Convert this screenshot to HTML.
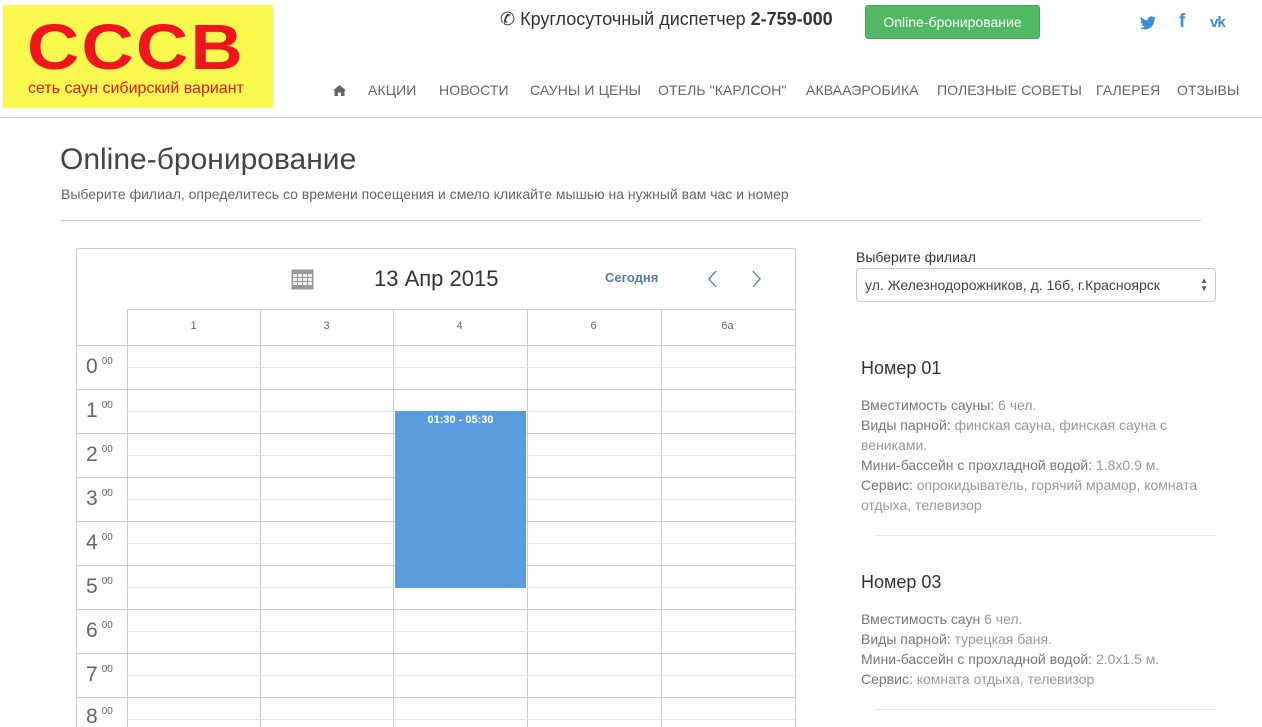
<!DOCTYPE html>
<html><head><meta charset="utf-8"><style>
*{margin:0;padding:0;box-sizing:border-box}
html,body{width:1262px;height:727px;overflow:hidden}
body{background:#fff;font-family:"Liberation Sans",sans-serif;position:relative;color:#333}
.a{position:absolute;white-space:nowrap}
.nav{top:82px;font-size:14px;color:#666;letter-spacing:0.1px}
.hl{position:absolute;left:127px;width:668px;height:1px}
.vl{position:absolute;top:309px;height:418px;width:1px;background:#ccc}
.hr{position:absolute;left:86px;font-size:21px;color:#666}
.hr sup{font-size:10px;vertical-align:9px;margin-left:4px}
.ch{position:absolute;top:320px;font-size:11px;color:#666;width:133px;text-align:center}
.inf{font-size:14px;line-height:20px;color:#777}
.inf span{color:#999}
</style></head><body>
<div class="a" style="left:3px;top:5px;width:270px;height:103px;background:#fafa4e"></div>
<div class="a" style="left:27px;top:12px;font-size:64px;font-weight:bold;color:#f0141e;letter-spacing:2px;line-height:70px;transform:scaleX(1.13);transform-origin:0 0">СССВ</div>
<div class="a" style="left:28px;top:80px;font-size:16px;color:#e8141e">сеть саун сибирский вариант</div>

<div class="a" style="left:500px;top:9px;font-size:18px;color:#333">&#9990; Круглосуточный диспетчер <b>2-759-000</b></div>
<div class="a" style="left:865px;top:5px;width:175px;height:34px;background:#51b865;border-radius:3px;border:1px solid #4aa55c;color:#fff;font-size:14px;text-align:center;line-height:32px">Online-бронирование</div>
<svg class="a" style="left:1140px;top:16px" width="16" height="14" viewBox="0 0 24 20"><path d="M24 2.4a10 10 0 0 1-2.8.8A5 5 0 0 0 23.3.4a10 10 0 0 1-3.1 1.2A4.9 4.9 0 0 0 11.8 6 14 14 0 0 1 1.7.9a4.9 4.9 0 0 0 1.5 6.6A4.9 4.9 0 0 1 1 6.9a4.9 4.9 0 0 0 3.9 4.8 5 5 0 0 1-2.2.1 4.9 4.9 0 0 0 4.6 3.4A9.9 9.9 0 0 1 0 17.3 14 14 0 0 0 7.5 19.5c9 0 14-7.5 14-14v-.6A10 10 0 0 0 24 2.4z" fill="#3a8fd0"/></svg>
<div class="a" style="left:1179px;top:11px;font-size:19px;color:#3a8fd0;font-weight:bold">f</div>
<div class="a" style="left:1210px;top:14px;font-size:15px;color:#3a8fd0;font-weight:bold;letter-spacing:-1px">vk</div>

<svg class="a" style="left:333px;top:85px" width="13" height="11" viewBox="0 0 13 11"><path d="M6.5 0 L13 5.5 L11.5 5.5 L11.5 11 L8 11 L8 7.5 L5 7.5 L5 11 L1.5 11 L1.5 5.5 L0 5.5 Z" fill="#666"/></svg>
<div class="a nav" style="left:368px">АКЦИИ</div>
<div class="a nav" style="left:439px">НОВОСТИ</div>
<div class="a nav" style="left:530px">САУНЫ И ЦЕНЫ</div>
<div class="a nav" style="left:658px">ОТЕЛЬ "КАРЛСОН"</div>
<div class="a nav" style="left:806px">АКВААЭРОБИКА</div>
<div class="a nav" style="left:937px">ПОЛЕЗНЫЕ СОВЕТЫ</div>
<div class="a nav" style="left:1096px">ГАЛЕРЕЯ</div>
<div class="a nav" style="left:1177px">ОТЗЫВЫ</div>
<div class="a" style="left:0;top:117px;width:1262px;height:1px;background:#ccc"></div>

<div class="a" style="left:60px;top:143px;font-size:30px;color:#444;font-weight:300">Online-бронирование</div>
<div class="a" style="left:61px;top:186px;font-size:14px;color:#666">Выберите филиал, определитесь со времени посещения и смело кликайте мышью на нужный вам час и номер</div>
<div class="a" style="left:61px;top:220px;width:1140px;height:1px;background:#ccc"></div>

<div class="a" style="left:76px;top:248px;width:720px;height:479px;border:1px solid #ccc;border-bottom:none;border-radius:3px 3px 0 0"></div>
<svg class="a" style="left:291px;top:267px" width="23" height="23" viewBox="0 0 23 23"><rect x="0.5" y="2.5" width="22" height="20" fill="#999"/><g fill="#eee"><rect x="2" y="7" width="4" height="3"/><rect x="7" y="7" width="4" height="3"/><rect x="12" y="7" width="4" height="3"/><rect x="17" y="7" width="4" height="3"/><rect x="2" y="11" width="4" height="3"/><rect x="7" y="11" width="4" height="3"/><rect x="12" y="11" width="4" height="3"/><rect x="17" y="11" width="4" height="3"/><rect x="2" y="15" width="4" height="3"/><rect x="7" y="15" width="4" height="3"/><rect x="12" y="15" width="4" height="3"/><rect x="17" y="15" width="4" height="3"/></g></svg>
<div class="a" style="left:374px;top:266px;font-size:22px;color:#333">13 Апр 2015</div>
<div class="a" style="left:605px;top:270px;font-size:13px;font-weight:bold;color:#4f7fae">Сегодня</div>
<svg class="a" style="left:705px;top:269px" width="14" height="20"><path d="M11 2 L4 10 L11 18" stroke="#4f7fae" stroke-width="1.3" fill="none"/></svg>
<svg class="a" style="left:750px;top:269px" width="14" height="20"><path d="M3 2 L10 10 L3 18" stroke="#4f7fae" stroke-width="1.3" fill="none"/></svg>

<div class="hl" style="top:309px;background:#ccc"></div>
<div class="hl" style="top:345px;background:#ccc;left:77px;width:718px"></div>
<div class="vl" style="left:127px"></div><div class="vl" style="left:260px"></div><div class="vl" style="left:393px"></div><div class="vl" style="left:527px"></div><div class="vl" style="left:661px"></div>
<div class="ch" style="left:127px">1</div><div class="ch" style="left:260px">3</div><div class="ch" style="left:393px">4</div><div class="ch" style="left:527px">6</div><div class="ch" style="left:661px">6а</div>

<div class="hl" style="top:367px;background:#e6e6e6"></div>
<div class="hl" style="top:389px;background:#ccc;left:77px;width:718px"></div>
<div class="hl" style="top:411px;background:#e6e6e6"></div>
<div class="hl" style="top:433px;background:#ccc;left:77px;width:718px"></div>
<div class="hl" style="top:455px;background:#e6e6e6"></div>
<div class="hl" style="top:477px;background:#ccc;left:77px;width:718px"></div>
<div class="hl" style="top:499px;background:#e6e6e6"></div>
<div class="hl" style="top:521px;background:#ccc;left:77px;width:718px"></div>
<div class="hl" style="top:543px;background:#e6e6e6"></div>
<div class="hl" style="top:565px;background:#ccc;left:77px;width:718px"></div>
<div class="hl" style="top:587px;background:#e6e6e6"></div>
<div class="hl" style="top:609px;background:#ccc;left:77px;width:718px"></div>
<div class="hl" style="top:631px;background:#e6e6e6"></div>
<div class="hl" style="top:653px;background:#ccc;left:77px;width:718px"></div>
<div class="hl" style="top:675px;background:#e6e6e6"></div>
<div class="hl" style="top:697px;background:#ccc;left:77px;width:718px"></div>
<div class="hl" style="top:719px;background:#e6e6e6"></div>

<div class="hr" style="top:355px">0<sup>00</sup></div>
<div class="hr" style="top:399px">1<sup>00</sup></div>
<div class="hr" style="top:443px">2<sup>00</sup></div>
<div class="hr" style="top:487px">3<sup>00</sup></div>
<div class="hr" style="top:531px">4<sup>00</sup></div>
<div class="hr" style="top:575px">5<sup>00</sup></div>
<div class="hr" style="top:619px">6<sup>00</sup></div>
<div class="hr" style="top:663px">7<sup>00</sup></div>
<div class="hr" style="top:705px;height:22px;overflow:hidden">8<sup>00</sup></div>

<div class="a" style="left:395px;top:411px;width:131px;height:177px;background:#5a9ddc;color:#fff;font-size:11px;font-weight:bold;text-align:center;padding-top:3px">01:30 - 05:30</div>

<div class="a" style="left:856px;top:249px;font-size:14px;color:#333">Выберите филиал</div>
<div class="a" style="left:856px;top:268px;width:360px;height:34px;border:1px solid #ccc;border-radius:4px;font-size:14px;color:#444;padding:8px 0 0 8px">ул. Железнодорожников, д. 16б, г.Красноярск<span style="position:absolute;right:7px;top:8px;font-size:8px;line-height:8px;color:#555">▲<br>▼</span></div>

<div class="a" style="left:861px;top:358px;font-size:18px;color:#333">Номер 01</div>
<div class="a inf" style="left:861px;top:395px">Вместимость сауны: <span>6 чел.</span><br>Виды парной: <span>финская сауна, финская сауна с</span><br><span>вениками.</span><br>Мини-бассейн с прохладной водой: <span>1.8x0.9 м.</span><br>Сервис: <span>опрокидыватель, горячий мрамор, комната</span><br><span>отдыха, телевизор</span></div>
<div class="a" style="left:876px;top:535px;width:340px;height:1px;background:#e6e6e6"></div>
<div class="a" style="left:861px;top:572px;font-size:18px;color:#333">Номер 03</div>
<div class="a inf" style="left:861px;top:609px">Вместимость саун <span>6 чел.</span><br>Виды парной: <span>турецкая баня.</span><br>Мини-бассейн с прохладной водой: <span>2.0x1.5 м.</span><br>Сервис: <span>комната отдыха, телевизор</span></div>
<div class="a" style="left:876px;top:709px;width:340px;height:1px;background:#e6e6e6"></div>
</body></html>
